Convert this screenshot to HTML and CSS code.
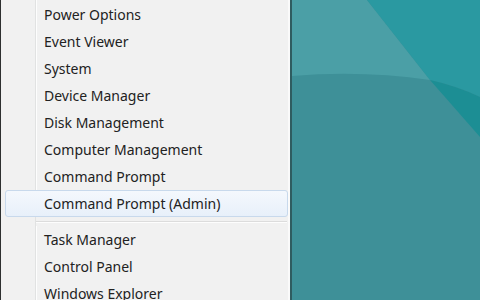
FILE: index.html
```html
<!DOCTYPE html>
<html lang="en">
<head>
    <meta charset="UTF-8">
    <title>Quick Link Menu</title>
    <link rel="stylesheet" href="styles.css">
</head>
<body>
<div class="screen">
    <ul class="menu">
        <li class="item">Power Options</li>
        <li class="item">Event Viewer</li>
        <li class="item">System</li>
        <li class="item">Device Manager</li>
        <li class="item">Disk Management</li>
        <li class="item">Computer Management</li>
        <li class="item">Command Prompt</li>
        <li class="item active">Command Prompt (Admin)</li>
        <li class="separator"></li>
        <li class="item">Task Manager</li>
        <li class="item">Control Panel</li>
        <li class="item">Windows Explorer</li>
    </ul>

    <div class="desktop">
        <svg viewBox="0 0 188 300" preserveAspectRatio="none">
            <rect width="188" height="300" fill="#3e9098"/>
            <path d="M0 0 L75 0 L138 80 Q70 70 0 76 Z" fill="#4b9fa6"/>
            <path d="M75 0 L188 0 L188 97 Q165 86 138 80 Z" fill="#2a99a1"/>
            <path d="M138 80 Q165 86 188 97 L188 137 Z" fill="#1c8e94"/>
        </svg>
    </div>
</div>
</body>
</html>
```

FILE: styles.css
```css
body { margin: 0; font-family: "Noto Sans", "Open Sans", sans-serif; }
.screen { display: flex; width: 480px; height: 300px; overflow: hidden; }

.menu {
    list-style: none;
    margin: 0;
    padding: 1px 0 0 0;
    width: 289px;
    flex: none;
    border-left: 1px solid #2e3030;
    border-right: 2px solid #2f5c60;
    /* светлая линия колонки иконок */
    background: linear-gradient(to right, #f1f1f1 34px, #e1e2e2 34px, #e1e2e2 35px, #fdfdfd 35px, #fdfdfd 36px, #f1f1f1 36px, #f1f1f1 287px, #fafafa 287px);
}

.item {
    height: 27px;
    line-height: 27px;
    padding-left: 43px;
    font-size: 14px;
    color: #222;
    white-space: nowrap;
}

.item.active {
    height: 25px;
    line-height: 25px;
    margin: 0 2px 0 4px;
    padding-left: 38px;
    border: 1px solid #c8d9ec;
    border-radius: 3px;
    background: linear-gradient(#f4f8fd, #e8f0fa);
}

.separator {
    height: 9px;
    margin-left: 35px;
    margin-right: 3px;
    background: linear-gradient(#f1f1f1 4px, #dcdcdc 4px, #dcdcdc 5px, #fdfdfd 5px, #fdfdfd 6px, #f1f1f1 6px);
}

.desktop { flex: 1; }
.desktop svg { display: block; width: 100%; height: 100%; }
```
